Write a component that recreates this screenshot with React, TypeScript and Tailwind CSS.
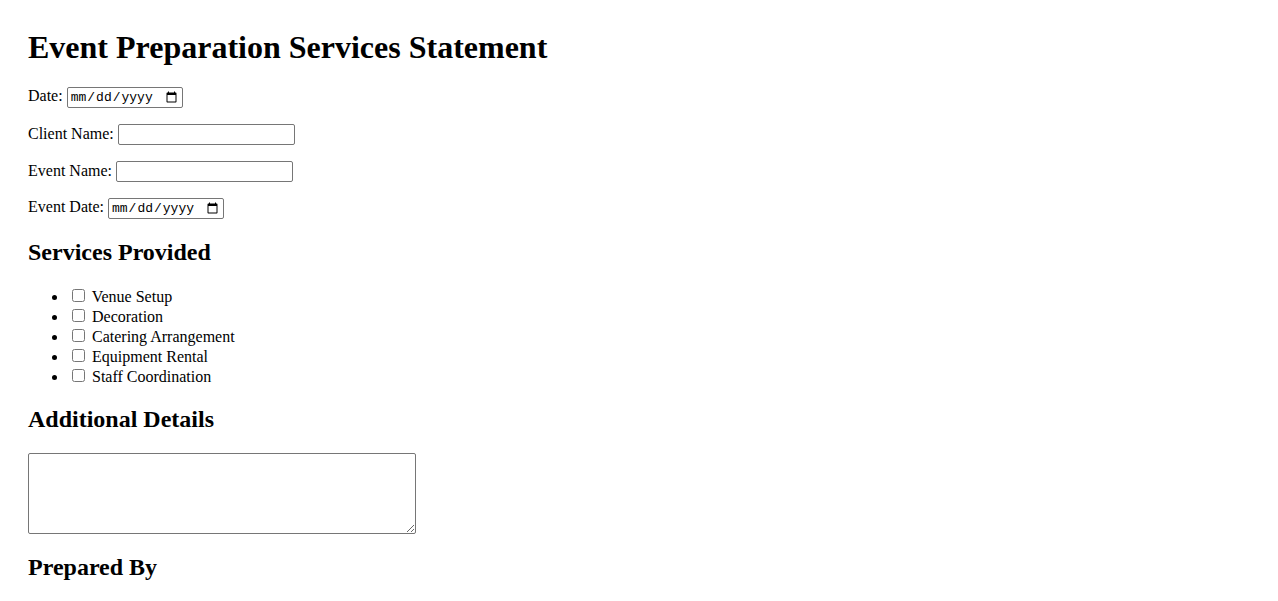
export default function App() {
  const services = [
    "Venue Setup",
    "Decoration",
    "Catering Arrangement",
    "Equipment Rental",
    "Staff Coordination",
  ];

  const textInput =
    "h-[21px] w-[177px] rounded-[2px] border border-[#767676] bg-white px-[2px] py-[1px] font-['Liberation_Sans',sans-serif] text-[13.33px]";
  const dateInput =
    "h-[21px] w-[116px] rounded-[2px] border border-[#767676] bg-white px-[2px] py-[1px] font-['Liberation_Mono',monospace] text-[13px]";

  return (
    <div className="min-h-screen bg-white px-[28px] pt-[29px] font-['Liberation_Serif',serif] text-[16px] leading-[normal] text-black">
      <h1 className="mb-[21.44px] text-[32px] font-bold">Event Preparation Services Statement</h1>

      <p className="my-4">
        Date: <input type="date" className={dateInput} />
      </p>
      <p className="my-4">
        Client Name: <input type="text" className={textInput} />
      </p>
      <p className="my-4">
        Event Name: <input type="text" className={textInput} />
      </p>
      <p className="my-4">
        Event Date: <input type="date" className={dateInput} />
      </p>

      {/* services */}
      <h2 className="my-[19.92px] text-[24px] font-bold">Services Provided</h2>
      <ul className="my-4 list-disc pl-10">
        {services.map((s) => (
          <li key={s}>
            <label>
              <input type="checkbox" className="mt-[3px] mr-[3px] mb-[3px] ml-[4px]" /> {s}
            </label>
          </li>
        ))}
      </ul>

      <h2 className="my-[19.92px] text-[24px] font-bold">Additional Details</h2>
      <textarea className="block h-[81px] w-[388px] rounded-[2px] border border-[#767676] bg-white p-[2px] font-['Liberation_Mono',monospace] text-[13.33px]" />

      <h2 className="my-[19.92px] text-[24px] font-bold">Prepared By</h2>
    </div>
  );
}
